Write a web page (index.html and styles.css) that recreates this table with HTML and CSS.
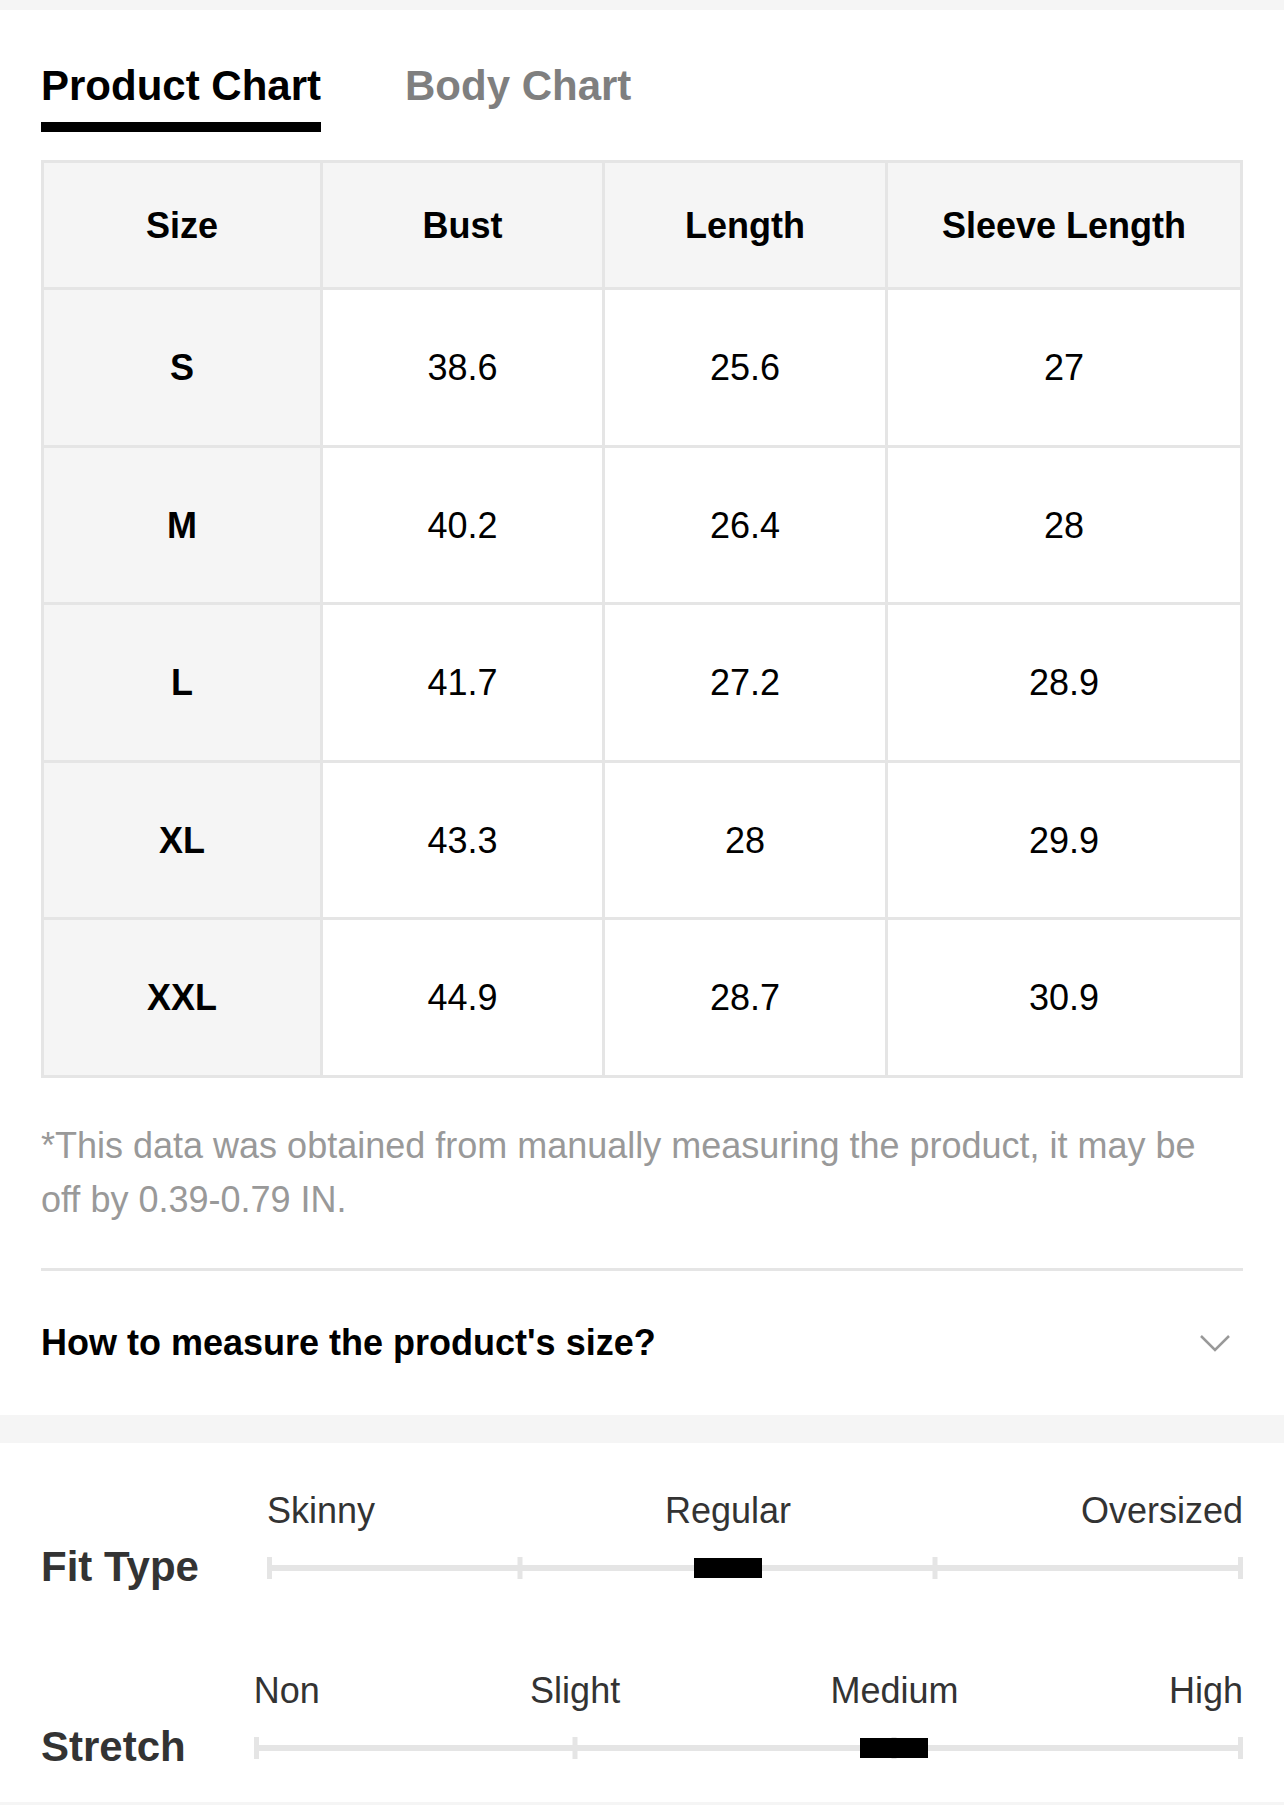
FILE: index.html
```html
<!DOCTYPE html>
<html lang="en">
<head>
    <meta charset="UTF-8">
    <meta name="viewport" content="width=device-width, initial-scale=1.0">
    <title>Size Guide</title>
    <link rel="stylesheet" href="styles.css">
</head>
<body>
    <div class="band band-top"></div>

    <div class="chart">
        <div class="tabs">
            <div class="tab active">Product Chart</div>
            <div class="tab">Body Chart</div>
        </div>

        <table class="size-table">
            <colgroup>
                <col class="col-size">
                <col class="col-bust">
                <col class="col-length">
                <col>
            </colgroup>
            <thead>
                <tr class="head-row">
                    <th>Size</th>
                    <th>Bust</th>
                    <th>Length</th>
                    <th>Sleeve Length</th>
                </tr>
            </thead>
            <tbody>
                <tr><th>S</th><td>38.6</td><td>25.6</td><td>27</td></tr>
                <tr><th>M</th><td>40.2</td><td>26.4</td><td>28</td></tr>
                <tr><th>L</th><td>41.7</td><td>27.2</td><td>28.9</td></tr>
                <tr><th>XL</th><td>43.3</td><td>28</td><td>29.9</td></tr>
                <tr><th>XXL</th><td>44.9</td><td>28.7</td><td>30.9</td></tr>
            </tbody>
        </table>

        <p class="note">*This data was obtained from manually measuring the product, it may be off by 0.39-0.79 IN.</p>

        <div class="measure">
            <span>How to measure the product's size?</span>
            <svg class="chevron" width="32" height="20" viewBox="0 0 32 20">
                <polyline points="2,3 16,17 30,3" fill="none" stroke="#999" stroke-width="2.5"/>
            </svg>
        </div>
    </div>

    <div class="band band-mid"></div>

    <div class="fit">
        <div class="fit-row">
            <div class="fit-name">Fit Type</div>
            <div class="slider">
                <div class="scale">
                    <span>Skinny</span>
                    <span>Regular</span>
                    <span>Oversized</span>
                </div>
                <div class="track">
                    <span class="tick tick-start"></span>
                    <span class="tick" style="left: 25.9%"></span>
                    <span class="tick" style="left: 68.4%"></span>
                    <span class="tick tick-end"></span>
                    <span class="marker" style="left: 47.2%"></span>
                </div>
            </div>
        </div>

        <div class="fit-row">
            <div class="fit-name">Stretch</div>
            <div class="slider">
                <div class="scale">
                    <span>Non</span>
                    <span>Slight</span>
                    <span>Medium</span>
                    <span>High</span>
                </div>
                <div class="track">
                    <span class="tick tick-start"></span>
                    <span class="tick" style="left: 32.5%"></span>
                    <span class="tick" style="left: 64.7%"></span>
                    <span class="tick tick-end"></span>
                    <span class="marker" style="left: 64.7%"></span>
                </div>
            </div>
        </div>
    </div>

    <div class="band band-bottom"></div>
</body>
</html>
```

FILE: styles.css
```css
* { margin: 0; padding: 0; box-sizing: border-box; }
body { font-family: "Liberation Sans", Arial, Helvetica, sans-serif; background: #fff; color: #000; }

.band { background: #f5f5f5; }
.band-top { height: 10px; }
.band-mid { height: 28px; }
.band-bottom { height: 10px; }

.chart { padding: 0 41px; }

/* tabs */
.tabs { display: flex; align-items: flex-start; gap: 84px; padding-top: 51px; }
.tab { font-size: 42px; font-weight: bold; line-height: 50px; color: #7f7f7f; }
.tab.active { color: #000; }
.tab.active::after { content: ""; display: block; height: 10px; margin-top: 11px; background: #000; }

/* table */
.size-table { width: 1202px; margin-top: 28px; table-layout: fixed; border-collapse: separate; border-spacing: 0; border-top: 3px solid #e5e5e5; border-left: 3px solid #e5e5e5; }
.col-size { width: 279px; }
.col-bust { width: 282px; }
.col-length { width: 283px; }
.size-table th, .size-table td { padding-top: 2px; border-right: 3px solid #e5e5e5; border-bottom: 3px solid #e5e5e5; text-align: center; vertical-align: middle; font-size: 36px; }
.size-table th { font-weight: bold; background: #f5f5f5; }
.size-table td { font-weight: normal; background: #fff; }
.size-table tr { height: 157.5px; }
.size-table .head-row { height: 127px; }

/* footnote */
.note { margin-top: 41px; font-size: 36px; line-height: 54px; color: #999; }

.measure { display: flex; align-items: center; justify-content: space-between; height: 147px; margin-top: 41px; border-top: 3px solid #e5e5e5; font-size: 36px; font-weight: bold; }
.chevron { margin-right: 12px; }

/* fit type / stretch */
.fit { display: flex; flex-direction: column; gap: 83px; padding: 48px 41px 34px; }
.fit-row { display: flex; align-items: flex-end; gap: 68px; }
.fit-name { font-size: 42px; font-weight: bold; line-height: 40px; color: #333; white-space: nowrap; margin-bottom: 1px; }
.slider { flex: 1; }
.scale { display: flex; justify-content: space-between; font-size: 36px; line-height: 40px; color: #333; }
.track { position: relative; height: 40px; margin-top: 17px; }
.track::before { content: ""; position: absolute; left: 0; right: 0; top: 17px; height: 6px; background: #e5e5e5; }
.tick { position: absolute; top: 9px; width: 5px; height: 22px; background: #e5e5e5; transform: translateX(-50%); }
.tick-start { left: 0; transform: none; }
.tick-end { right: 0; transform: none; }
.marker { position: absolute; top: 10px; width: 68px; height: 20px; background: #000; transform: translateX(-50%); }
```
